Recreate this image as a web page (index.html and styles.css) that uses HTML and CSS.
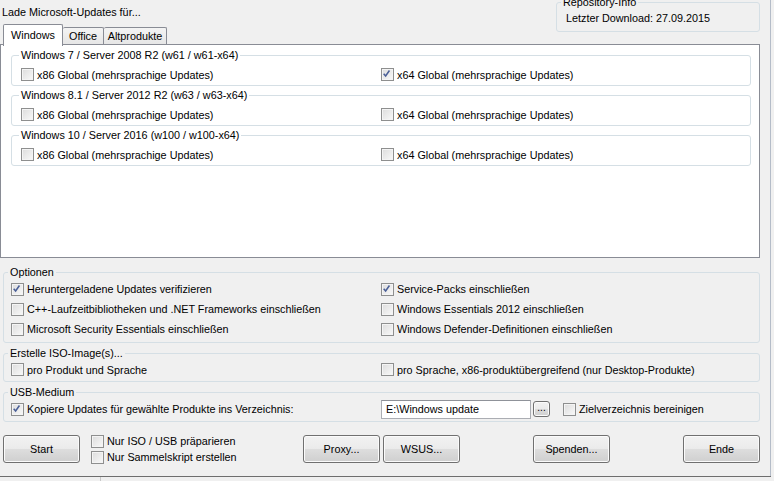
FILE: index.html
```html
<!DOCTYPE html>
<html lang="de">
<head>
    <meta charset="UTF-8">
    <title>WSUS Offline Update</title>
    <link rel="stylesheet" href="styles.css">
</head>
<body>
    <div class="window">
        <div class="top">
            <div class="top-left">
                <div class="title">Lade Microsoft-Updates für...</div>
                <div class="tabs">
                    <div class="tab active" style="width: 60px">Windows</div>
                    <div class="tab" style="width: 41px">Office</div>
                    <div class="tab" style="width: 63px">Altprodukte</div>
                </div>
            </div>
            <fieldset class="group repo">
                <legend>Repository-Info</legend>
                <div class="repo-text">Letzter Download: 27.09.2015</div>
            </fieldset>
        </div>

        <div class="tab-panel">
            <fieldset class="group os">
                <legend>Windows 7 / Server 2008 R2 (w61 / w61-x64)</legend>
                <div class="os-row">
                    <label class="check"><span class="cb"></span>x86 Global (mehrsprachige Updates)</label>
                    <label class="check"><span class="cb checked"><svg viewBox="0 0 13 13"><polyline points="3,6.5 5.3,9.2 9.8,2.8"/></svg></span>x64 Global (mehrsprachige Updates)</label>
                </div>
            </fieldset>
            <fieldset class="group os">
                <legend>Windows 8.1 / Server 2012 R2 (w63 / w63-x64)</legend>
                <div class="os-row">
                    <label class="check"><span class="cb"></span>x86 Global (mehrsprachige Updates)</label>
                    <label class="check"><span class="cb"></span>x64 Global (mehrsprachige Updates)</label>
                </div>
            </fieldset>
            <fieldset class="group os">
                <legend>Windows 10 / Server 2016 (w100 / w100-x64)</legend>
                <div class="os-row">
                    <label class="check"><span class="cb"></span>x86 Global (mehrsprachige Updates)</label>
                    <label class="check"><span class="cb"></span>x64 Global (mehrsprachige Updates)</label>
                </div>
            </fieldset>
        </div>

        <fieldset class="group outer options">
            <legend>Optionen</legend>
            <div class="opt-grid">
                <label class="check"><span class="cb checked"><svg viewBox="0 0 13 13"><polyline points="3,6.5 5.3,9.2 9.8,2.8"/></svg></span>Heruntergeladene Updates verifizieren</label>
                <label class="check"><span class="cb checked"><svg viewBox="0 0 13 13"><polyline points="3,6.5 5.3,9.2 9.8,2.8"/></svg></span>Service-Packs einschließen</label>
                <label class="check"><span class="cb"></span>C++-Laufzeitbibliotheken und .NET Frameworks einschließen</label>
                <label class="check"><span class="cb"></span>Windows Essentials 2012 einschließen</label>
                <label class="check"><span class="cb"></span>Microsoft Security Essentials einschließen</label>
                <label class="check"><span class="cb"></span>Windows Defender-Definitionen einschließen</label>
            </div>
        </fieldset>

        <fieldset class="group outer iso">
            <legend>Erstelle ISO-Image(s)...</legend>
            <div class="opt-grid single">
                <label class="check"><span class="cb"></span>pro Produkt und Sprache</label>
                <label class="check"><span class="cb"></span>pro Sprache, x86-produktübergreifend (nur Desktop-Produkte)</label>
            </div>
        </fieldset>

        <fieldset class="group outer usb">
            <legend>USB-Medium</legend>
            <div class="opt-grid usb-row">
                <label class="check"><span class="cb checked"><svg viewBox="0 0 13 13"><polyline points="3,6.5 5.3,9.2 9.8,2.8"/></svg></span>Kopiere Updates für gewählte Produkte ins Verzeichnis:</label>
                <div class="usb-target">
                    <div class="path-input">E:\Windows update</div>
                    <div class="btn browse">...</div>
                    <label class="check clean"><span class="cb"></span>Zielverzeichnis bereinigen</label>
                </div>
            </div>
        </fieldset>

        <div class="actions">
            <div class="btn big start">Start</div>
            <div class="only-checks">
                <label class="check"><span class="cb"></span>Nur ISO / USB präparieren</label>
                <label class="check"><span class="cb"></span>Nur Sammelskript erstellen</label>
            </div>
            <div class="btn big">Proxy...</div>
            <div class="btn big wsus">WSUS...</div>
            <div class="btn big spaced">Spenden...</div>
            <div class="btn big spaced">Ende</div>
        </div>
    </div>
    <div class="statusbar">
        <div class="status-cell"></div>
    </div>
</body>
</html>
```

FILE: styles.css
```css
body {
    margin: 0;
    width: 774px;
    height: 481px;
    overflow: hidden;
    background: #f0f0f0;
    font-family: "Liberation Sans", Arial, sans-serif;
    font-size: 10.8px;
    color: #000;
}

.window {
    width: 771px;
    height: 476px;
    border-right: 1px solid #b4bcc8;
    box-sizing: border-box;
    overflow: hidden;
}

/* header with title, tabs and repository box */
.top {
    display: flex;
    height: 44px;
}

.top-left {
    flex: 1;
}

.title {
    height: 24px;
    box-sizing: border-box;
    padding: 5px 0 0 2px;
    line-height: 14px;
}

.tabs {
    display: flex;
    align-items: flex-end;
    height: 20px;
    padding-left: 3px;
}

.tab {
    height: 17px;
    box-sizing: border-box;
    border: 1px solid #898c95;
    border-bottom: none;
    border-left: none;
    border-radius: 2px 2px 0 0;
    background: linear-gradient(#f4f4f4, #e6e6e6);
    text-align: center;
    line-height: 14px;
    padding-top: 1px;
}

.tab.active {
    height: 22px;
    margin-bottom: -2px;
    border-left: 1px solid #898c95;
    background: #fff;
    padding-top: 3px;
    position: relative;
    z-index: 2;
}

/* group boxes */
.group {
    margin: 0;
    padding: 0;
    border: 1px solid #d5dfe5;
    border-radius: 3px;
    box-sizing: border-box;
    min-width: 0;
}

.group legend {
    padding: 0 2px;
    margin-left: 7px;
    line-height: 14px;
}

.repo {
    width: 204px;
    margin: -5px 10px 0 0;
    align-self: flex-start;
}

.repo legend {
    margin-left: 4px;
}

.repo-text {
    line-height: 18px;
    padding: 0 0 4px 9px;
}

.tab-panel {
    width: 760px;
    height: 214px;
    box-sizing: border-box;
    border: 1px solid #898c95;
    background: #fff;
    padding-top: 3px;
}

.os {
    width: 740px;
    margin: 0 0 2px 10px;
}

.os-row {
    display: grid;
    grid-template-columns: 360px 1fr;
    padding: 4px 0 2px 9px;
}

.os-row .check {
    height: 17px;
}

.outer {
    width: 757px;
    margin-left: 3px;
}

.outer legend {
    margin-left: 4px;
}

.options {
    margin-top: 7px;
}

.iso,
.usb {
    margin-top: 3px;
}

.opt-grid {
    display: grid;
    grid-template-columns: 370px 1fr;
    grid-auto-rows: 20px;
    padding: 0 0 3px 7px;
}

.opt-grid.single {
    grid-auto-rows: 19px;
    padding-bottom: 2px;
}

.usb-row {
    padding-bottom: 2px;
}

/* checkboxes */
.check {
    display: flex;
    align-items: center;
    white-space: nowrap;
}

.cb {
    width: 13px;
    height: 13px;
    box-sizing: border-box;
    border: 1px solid #8e8f8f;
    background: linear-gradient(135deg, #dcdcdc, #f9f9f9);
    box-shadow: inset 0 0 0 1px #f4f4f4;
    margin-right: 3px;
    flex-shrink: 0;
}

.cb svg {
    display: block;
    width: 11px;
    height: 11px;
}

.cb svg polyline {
    fill: none;
    stroke: #4a5f97;
    stroke-width: 1.8;
    transform: translate(-1px, -1px);
}

.usb-target {
    display: flex;
    align-items: center;
}

.path-input {
    width: 150px;
    height: 19px;
    box-sizing: border-box;
    border: 1px solid #abadb3;
    border-top-color: #8f9299;
    background: #fff;
    line-height: 17px;
    padding-left: 4px;
}

/* buttons */
.btn {
    box-sizing: border-box;
    border: 1px solid #707070;
    border-radius: 3px;
    background: linear-gradient(#f2f2f2 0%, #ebebeb 48%, #dddddd 52%, #cfcfcf 100%);
    box-shadow: inset 0 0 0 1px #fbfbfb;
    text-align: center;
}

.browse {
    width: 17px;
    height: 16px;
    margin-left: 2px;
    line-height: 11px;
    font-size: 10px;
}

.clean {
    margin-left: 13px;
}

.actions {
    display: flex;
    align-items: center;
    margin-top: 13px;
    height: 28px;
}

.big {
    width: 77px;
    height: 28px;
    line-height: 26px;
}

.start {
    margin-left: 3px;
}

.only-checks {
    width: 212px;
    margin-left: 11px;
    display: flex;
    flex-direction: column;
}

.only-checks .check {
    height: 16px;
}

.wsus {
    margin-left: 3px;
}

.spaced {
    margin-left: 73px;
}

.statusbar {
    height: 5px;
    width: 771px;
    border-top: 1px solid #6e6e6e;
}

.status-cell {
    width: 100px;
    height: 5px;
    border-right: 1px solid #c8c8c8;
}
```
